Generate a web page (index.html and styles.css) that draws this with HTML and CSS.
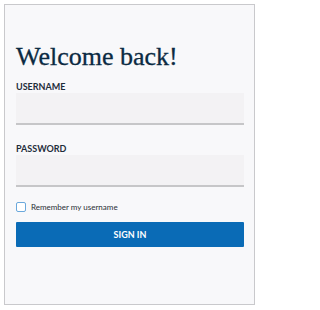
FILE: index.html
```html
<!DOCTYPE html>
<html lang="en">
<head>
<meta charset="utf-8">
<title>Sign in</title>
<link rel="stylesheet" href="styles.css">
</head>
<body>
<div class="card">
  <h1 class="title">Welcome back!</h1>
  <form class="form">
    <label class="label" for="user">USERNAME</label>
    <input class="field" id="user" type="text">
    <label class="label label-gap" for="pass">PASSWORD</label>
    <input class="field" id="pass" type="password">
    <div class="remember">
      <span class="check"></span>
      <span class="remember-text">Remember my username</span>
    </div>
    <button class="btn" type="button">SIGN IN</button>
  </form>
</div>
</body>
</html>
```

FILE: styles.css
```css
html, body {
  margin: 0;
  padding: 0;
  background: #ffffff;
}
body {
  padding: 4px 0 0 4px;
  font-family: Lato, "Liberation Sans", sans-serif;
}
.card {
  box-sizing: border-box;
  width: 251px;
  height: 301px;
  border: 1px solid #c9c9cc;
  background: #f8f8fa;
  padding: 37px 10px 0 11px;
}
.title {
  margin: 0;
  font-family: "Liberation Serif", serif;
  font-weight: normal;
  font-size: 26px;
  line-height: 30px;
  color: #0b2a42;
  -webkit-text-stroke: 0.3px #0b2a42;
}
.form {
  display: flex;
  flex-direction: column;
  width: 228px;
  margin-top: 9px;
}
.label {
  font-size: 9px;
  line-height: 11px;
  font-weight: bold;
  color: #1f2d3a;
  margin-bottom: 1px;
}
.label-gap {
  margin-top: 18px;
}
.field {
  box-sizing: border-box;
  height: 32px;
  width: 100%;
  margin: 0;
  border: none;
  border-bottom: 2px solid #c6c6c8;
  background: #f3f2f4;
  outline: none;
}
.remember {
  display: flex;
  align-items: center;
  gap: 5px;
  margin-top: 15px;
  height: 10px;
}
.check {
  box-sizing: border-box;
  width: 10px;
  height: 10px;
  border: 1px solid #6aa8dc;
  border-radius: 2px;
  background: #ffffff;
}
.remember-text {
  font-size: 8px;
  line-height: 10px;
  color: #2a2f36;
}
.btn {
  margin-top: 10px;
  height: 25px;
  width: 100%;
  border: none;
  border-radius: 1px;
  background: #0a6bb6;
  color: #ffffff;
  font-family: Lato, "Liberation Sans", sans-serif;
  font-weight: bold;
  font-size: 9px;
  padding: 0;
}
```
